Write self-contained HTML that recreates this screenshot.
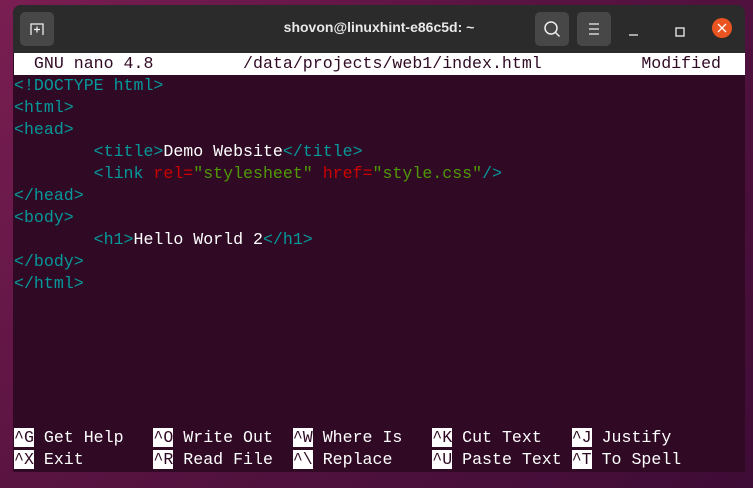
<!DOCTYPE html>
<html><head><style>
body{margin:0;width:753px;height:488px;overflow:hidden;background:linear-gradient(135deg,#7a1e52 0%,#5a1442 40%,#3e0c36 100%);font-family:"Liberation Sans",sans-serif;position:relative}
.win{position:absolute;left:13px;top:5px;width:732px;height:467px;background:#300a24;border-radius:8px 8px 0 0;overflow:hidden}
.tb{position:absolute;left:0;top:0;width:732px;height:48px;background:#2b2b2b}
.btn{position:absolute;top:7px;width:34px;height:34px;background:#474747;border-radius:5px}
.title{position:absolute;left:0;width:732px;top:14px;text-align:center;color:#e8e8e8;font-weight:bold;font-size:14px}
.t{position:absolute;left:1px;font-family:"Liberation Mono",monospace;font-size:16.6px;line-height:22px;white-space:pre;color:#fff}
.hdr{position:absolute;left:1px;top:48px;width:731px;height:22px;background:#fff}
.c{color:#06989a}.r{color:#cc0000}.g{color:#4e9a06}
.k{background:#fff;color:#300a24}
</style></head><body>
<div class="win">
<div class="tb">
<div class="btn" style="left:7px"><svg width="34" height="34"><path d="M11 23V12h12v11M14 17.5h6M17 14.5v6" stroke="#eee" stroke-width="1.3" fill="none"/></svg></div>
<div class="title">shovon@linuxhint-e86c5d: ~</div>
<div class="btn" style="left:522px"><svg width="34" height="34"><circle cx="16" cy="16" r="6" stroke="#eee" stroke-width="1.5" fill="none"/><path d="M20.5 20.5l4 4" stroke="#eee" stroke-width="1.5"/></svg></div>
<div class="btn" style="left:564px"><svg width="34" height="34"><path d="M12 12h10M12 17h10M12 22h10" stroke="#eee" stroke-width="1.3"/></svg></div>
<svg style="position:absolute;left:0;top:0" width="732" height="48"><path d="M616 30h9" stroke="#eee" stroke-width="1.3"/><rect x="663" y="23" width="8" height="8" stroke="#eee" stroke-width="1.3" fill="none"/><circle cx="709" cy="23" r="10" fill="#e95420"/><path d="M705 19l8 8M713 19l-8 8" stroke="#fff" stroke-width="1.3"/></svg>
</div>
<div class="hdr"></div>
<div class="t" style="top:48px;color:#300a24">  GNU nano 4.8         /data/projects/web1/index.html          Modified</div>
<div class="t" style="top:70px"><span class="c">&lt;!DOCTYPE html&gt;</span>
<span class="c">&lt;html&gt;</span>
<span class="c">&lt;head&gt;</span>
        <span class="c">&lt;title&gt;</span>Demo Website<span class="c">&lt;/title&gt;</span>
        <span class="c">&lt;link </span><span class="r">rel=</span><span class="g">"stylesheet"</span> <span class="r">href=</span><span class="g">"style.css"</span><span class="c">/&gt;</span>
<span class="c">&lt;/head&gt;</span>
<span class="c">&lt;body&gt;</span>
        <span class="c">&lt;h1&gt;</span>Hello World 2<span class="c">&lt;/h1&gt;</span>
<span class="c">&lt;/body&gt;</span>
<span class="c">&lt;/html&gt;</span></div>
<div class="t" style="top:422px"><span class="k">^G</span> Get Help   <span class="k">^O</span> Write Out  <span class="k">^W</span> Where Is   <span class="k">^K</span> Cut Text   <span class="k">^J</span> Justify
<span class="k">^X</span> Exit       <span class="k">^R</span> Read File  <span class="k">^\</span> Replace    <span class="k">^U</span> Paste Text <span class="k">^T</span> To Spell</div>
</div>
</body></html>
